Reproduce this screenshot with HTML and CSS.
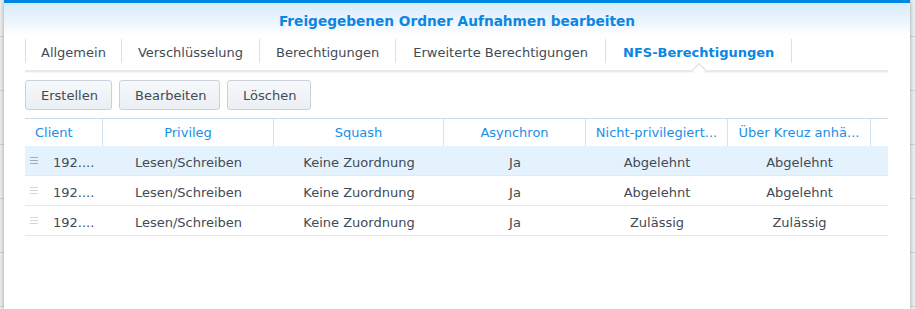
FILE: index.html
```html
<!DOCTYPE html>
<html lang="de">
<head>
    <meta charset="UTF-8">
    <title>Freigegebenen Ordner Aufnahmen bearbeiten</title>
    <link rel="stylesheet" href="styles.css">
</head>
<body>
    <div class="dialog">
        <div class="dialog-header">Freigegebenen Ordner Aufnahmen bearbeiten</div>

        <div class="dialog-body">
            <div class="tabs">
                <div class="tab">Allgemein</div>
                <div class="tab">Verschlüsselung</div>
                <div class="tab">Berechtigungen</div>
                <div class="tab">Erweiterte Berechtigungen</div>
                <div class="tab active">NFS-Berechtigungen</div>
            </div>

            <div class="toolbar">
                <button class="btn">Erstellen</button>
                <button class="btn">Bearbeiten</button>
                <button class="btn">Löschen</button>
            </div>

            <div class="grid">
                <div class="grid-row grid-head">
                    <div class="cell left">Client</div>
                    <div class="cell">Privileg</div>
                    <div class="cell">Squash</div>
                    <div class="cell">Asynchron</div>
                    <div class="cell">Nicht-privilegiert...</div>
                    <div class="cell">Über Kreuz anhä...</div>
                    <div class="cell"></div>
                </div>
                <div class="grid-row selected">
                    <div class="cell left"><span class="handle"></span>192....</div>
                    <div class="cell">Lesen/Schreiben</div>
                    <div class="cell">Keine Zuordnung</div>
                    <div class="cell">Ja</div>
                    <div class="cell">Abgelehnt</div>
                    <div class="cell">Abgelehnt</div>
                    <div class="cell"></div>
                </div>
                <div class="grid-row">
                    <div class="cell left"><span class="handle"></span>192....</div>
                    <div class="cell">Lesen/Schreiben</div>
                    <div class="cell">Keine Zuordnung</div>
                    <div class="cell">Ja</div>
                    <div class="cell">Abgelehnt</div>
                    <div class="cell">Abgelehnt</div>
                    <div class="cell"></div>
                </div>
                <div class="grid-row">
                    <div class="cell left"><span class="handle"></span>192....</div>
                    <div class="cell">Lesen/Schreiben</div>
                    <div class="cell">Keine Zuordnung</div>
                    <div class="cell">Ja</div>
                    <div class="cell">Zulässig</div>
                    <div class="cell">Zulässig</div>
                    <div class="cell"></div>
                </div>
            </div>
        </div>
    </div>
</body>
</html>
```

FILE: styles.css
```css
:root {
    --blue: #0a86e3;
    --text: #414b55;
    --line: #e6e9ec;
}

* {
    box-sizing: border-box;
    margin: 0;
    padding: 0;
}

body {
    width: 915px;
    height: 309px;
    overflow: hidden;
    font-family: 'DejaVu Sans', Verdana, sans-serif;
    font-size: 13px;
    color: var(--text);
    background-color: #eef0f2;
    background-image: repeating-linear-gradient(180deg, transparent 0, transparent 36px, #d3d6d9 36px, #d3d6d9 37px, transparent 37px, transparent 54px);
}

.dialog {
    margin-left: 4px;
    width: 906px;
    height: 309px;
    background: #fff;
    box-shadow: 0 0 5px rgba(0, 0, 0, 0.35);
}

.dialog-header {
    height: 36px;
    border-top: 3px solid #0086e5;
    background: linear-gradient(180deg, #d8ebfb 0%, #eef6fd 60%, #ffffff 100%);
    color: var(--blue);
    font-size: 13.7px;
    font-weight: bold;
    text-align: center;
    line-height: 36px;
}

.dialog-body {
    padding: 0 22px 0 21px;
}

/* tab strip */
.tabs {
    display: flex;
    height: 36px;
    padding-top: 3px;
    border-bottom: 2px solid #e8e8e8;
    box-shadow: 0 1px 1px rgba(0, 0, 0, 0.03);
}

.tab {
    position: relative;
    height: 24px;
    line-height: 27px;
    padding: 0 17px;
    border-right: 1px solid #d9e0e7;
    white-space: nowrap;
}

.tab:first-child {
    padding: 0 15px;
    border-left: 1px solid #d9e0e7;
}

.tab:nth-child(2),
.tab:nth-child(3) {
    padding: 0 16px;
}

.tab.active {
    color: var(--blue);
    font-weight: bold;
}

.tab.active::after {
    content: '';
    position: absolute;
    left: 50%;
    bottom: -12px;
    width: 9px;
    height: 9px;
    margin-left: -5px;
    background: #fff;
    border-top: 1px solid #dcdcdc;
    border-left: 1px solid #dcdcdc;
    transform: rotate(45deg);
}

/* buttons */
.toolbar {
    display: flex;
    gap: 7px;
    margin-top: 8px;
}

.btn {
    height: 30px;
    padding: 0 15px;
    border: 1px solid #c9d2db;
    border-radius: 3px;
    background: linear-gradient(180deg, #f7f9fb 0%, #eaeff4 100%);
    color: var(--text);
    font-family: inherit;
    font-size: 13px;
}

.btn:nth-child(1) { width: 87px; }
.btn:nth-child(2) { width: 101px; }
.btn:nth-child(3) { width: 84px; }

/* grid */
.grid {
    margin-top: 8px;
    border-top: 1px solid #c9dcec;
}

.grid-row {
    display: grid;
    grid-template-columns: 78px 171px 170px 142px 142px 143px 17px;
    height: 30px;
    border-bottom: 1px solid var(--line);
}

.grid-head {
    height: 27px;
    border-bottom: none;
    color: #1a8ee6;
}

.grid-head .cell {
    border-right: 1px solid #d6e3ef;
    line-height: 27px;
    padding-top: 0;
}

.grid-head .cell:last-child {
    border-right: none;
}

.grid-row.selected {
    background: #e4f2fd;
}

.cell {
    text-align: center;
    line-height: 29px;
    padding: 2px 8px 0;
    white-space: nowrap;
    overflow: hidden;
}

.cell.left {
    text-align: left;
    padding-left: 10px;
}

.handle {
    display: inline-block;
    width: 8px;
    height: 7px;
    margin: 0 15px 0 -5px;
    vertical-align: 3px;
    background: repeating-linear-gradient(180deg, #d4d8dc 0, #d4d8dc 1px, transparent 1px, transparent 3px);
}

.selected .handle {
    background: repeating-linear-gradient(180deg, #a5acb3 0, #a5acb3 1px, transparent 1px, transparent 3px);
}
```
